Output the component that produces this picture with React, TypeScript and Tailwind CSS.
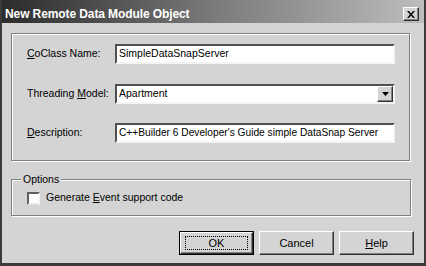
import type { ReactNode } from 'react';

const font = "font-['Liberation_Sans',Arial,sans-serif]";

function Accel({ children }: { children: ReactNode }) {
  return <span className="underline underline-offset-[1px]">{children}</span>;
}

function Sunken({ children, className = '' }: { children: ReactNode; className?: string }) {
  return (
    <div
      className={`flex h-[20px] items-center border-2 border-t-[#505050] border-l-[#505050] border-r-[#f4f4f4] border-b-[#f4f4f4] bg-white ${className}`}
    >
      {children}
    </div>
  );
}

function Field({ label, children }: { label: ReactNode; children: ReactNode }) {
  return (
    <div className="flex items-center">
      <div className="w-[88px] shrink-0 text-[10.5px] text-black">{label}</div>
      <div className="flex-1">{children}</div>
    </div>
  );
}

function Bevel({ children, className = '' }: { children: ReactNode; className?: string }) {
  return (
    <div
      className={`flex items-center justify-center border border-t-white border-l-white border-r-[#303030] border-b-[#303030] bg-[#d4d4d4] shadow-[inset_-1px_-1px_0_#808080] ${className}`}
    >
      {children}
    </div>
  );
}

export default function App() {
  return (
    <div
      className={`${font} flex h-[266px] w-[426px] flex-col border-x-2 border-b-[3px] border-[#3a3a3a] bg-[#d4d4d4] text-black`}
    >
      {/* Title bar */}
      <div className="flex h-[23px] shrink-0 items-center justify-between bg-linear-to-r from-[#2c2c2c] via-[#7a7a7a] to-[#bdbdbd] pt-[5px] pl-[3px] pr-[5px]">
        <span className="text-[12px] font-bold leading-none tracking-[-0.1px] text-white">
          New Remote Data Module Object
        </span>
        <Bevel className="h-[14px] w-[16px]">
          <svg width="8" height="7" viewBox="0 0 8 7">
            <path d="M0 0h2l2 2.5L6 0h2L5 3.5 8 7H6L4 4.5 2 7H0l3-3.5z" fill="#000" />
          </svg>
        </Bevel>
      </div>

      {/* Body */}
      <div className="flex flex-1 flex-col pl-[9px] pr-[10px] pt-[10px]">
        <div className="mr-[4px] flex h-[128px] flex-col border border-[#808080] pl-[15px] pr-[14px] pt-[10px] shadow-[inset_1px_1px_0_#fff,1px_1px_0_#fff]">
          <Field
            label={
              <>
                <Accel>C</Accel>oClass Name:
              </>
            }
          >
            <Sunken>
              <span className="pl-[2px] text-[10.5px]">SimpleDataSnapServer</span>
            </Sunken>
          </Field>
          <div className="mt-[20px]">
            <Field
              label={
                <>
                  Threading <Accel>M</Accel>odel:
                </>
              }
            >
              <Sunken className="justify-between">
                <span className="pl-[2px] text-[10.5px]">Apartment</span>
                <Bevel className="h-[16px] w-[16px]">
                  <svg width="7" height="4" viewBox="0 0 7 4">
                    <path d="M0 0h7L3.5 4z" fill="#000" />
                  </svg>
                </Bevel>
              </Sunken>
            </Field>
          </div>
          <div className="mt-[19px]">
            <Field
              label={
                <>
                  <Accel>D</Accel>escription:
                </>
              }
            >
              <Sunken>
                <span className="pl-[2px] text-[10.2px] whitespace-nowrap">
                  C++Builder 6 Developer&apos;s Guide simple DataSnap Server
                </span>
              </Sunken>
            </Field>
          </div>
        </div>

        {/* Options group */}
        <div className="relative mr-[3px] mt-[18px] flex h-[37px] items-center border border-[#808080] pl-[15px] shadow-[inset_1px_1px_0_#fff,1px_1px_0_#fff]">
          <span className="absolute -top-[7px] left-[9px] bg-[#d4d4d4] px-[2px] text-[10.5px] leading-[12px]">
            Options
          </span>
          <div className="mt-[1px] h-[13px] w-[13px] border-2 border-t-[#606060] border-l-[#606060] border-r-[#f4f4f4] border-b-[#e4e4e4] bg-white" />
          <span className="ml-[6px] text-[10.5px]">
            Generate <Accel>E</Accel>vent support code
          </span>
        </div>

        {/* Buttons */}
        <div className="mt-[15px] flex justify-end gap-[5px]">
          <div className="h-[24px] w-[75px] border border-black">
            <Bevel className="h-full w-full">
              <div className="flex h-[14px] w-[63px] items-center justify-center border border-dotted border-black text-[11px]">
                OK
              </div>
            </Bevel>
          </div>
          <Bevel className="h-[24px] w-[75px] text-[11px]">Cancel</Bevel>
          <Bevel className="h-[24px] w-[75px] text-[11px]">
            <span>
              <Accel>H</Accel>elp
            </span>
          </Bevel>
        </div>
      </div>
    </div>
  );
}
